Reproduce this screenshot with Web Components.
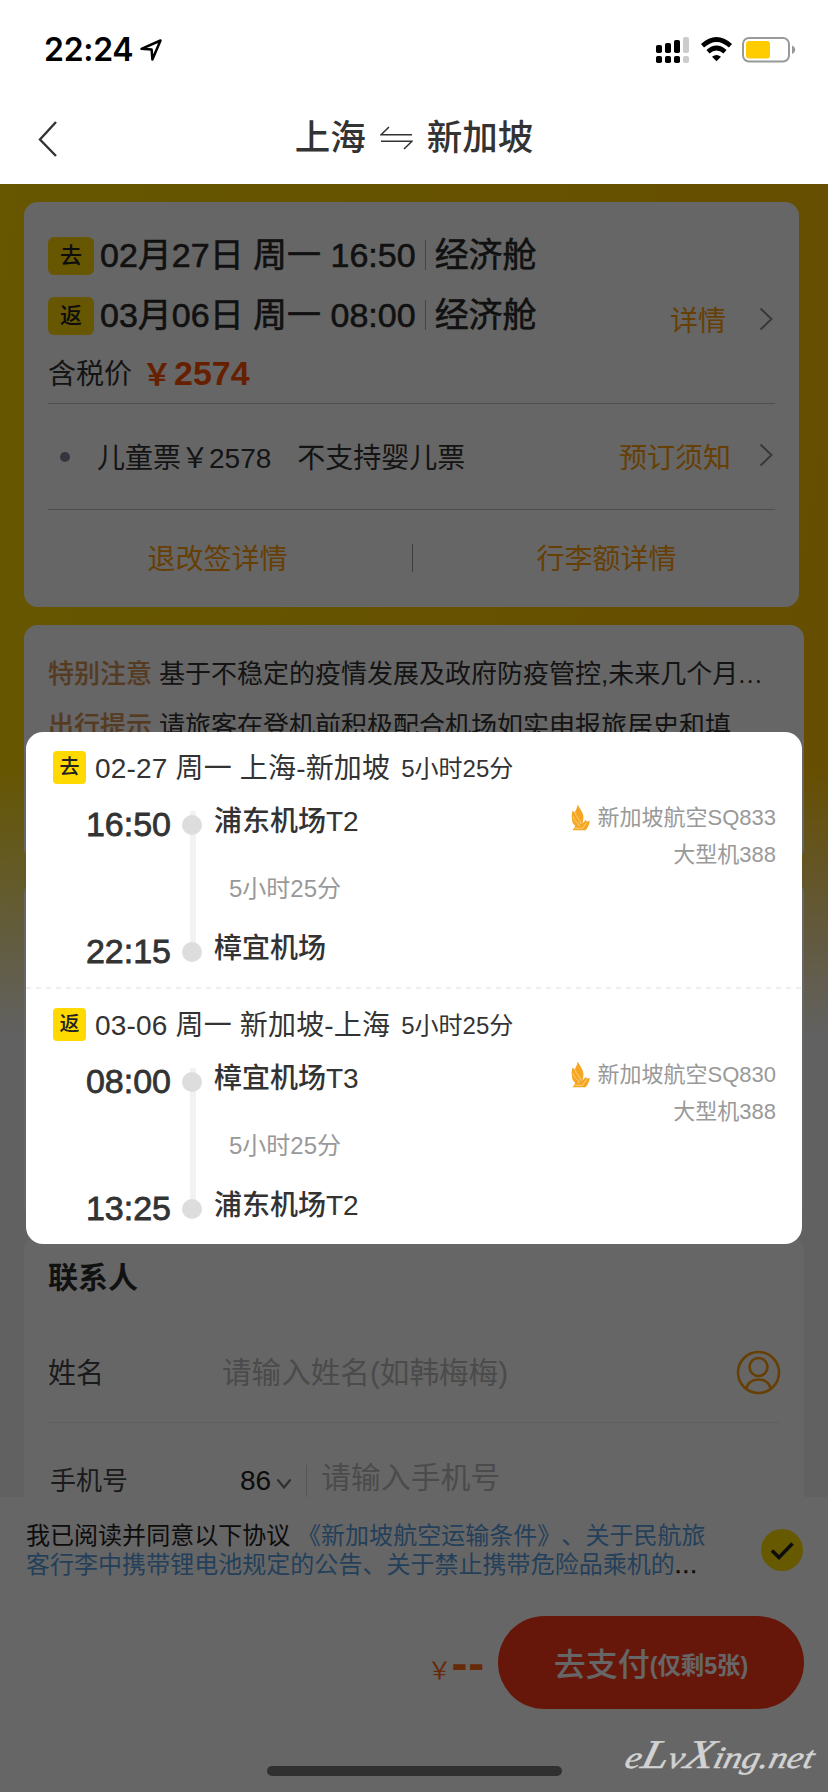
<!DOCTYPE html>
<html lang="zh-CN">
<head>
<meta charset="utf-8">
<title>上海 ⇋ 新加坡</title>
<style>
html,body{margin:0;padding:0}
body{width:828px;height:1792px;overflow:hidden;background:#fff;font-family:"Liberation Sans","Noto Sans CJK SC",sans-serif;color:#333;text-spacing-trim:space-all}
</style>
</head>
<body>
<booking-page></booking-page>
<script>
const define = (name, html) => customElements.define(name, class extends HTMLElement {
  connectedCallback() {
    if (this.shadowRoot) return;
    const t = document.createElement('template');
    t.innerHTML = '<style>*{box-sizing:border-box}:host{display:block;box-sizing:border-box;white-space:nowrap}</style>' +
      (typeof html === 'function' ? html(this) : html);
    this.attachShadow({mode: 'open'}).append(t.content.cloneNode(true));
  }
});

define('status-bar', `
<style>
:host{height:92px;display:flex;padding:8px 32px 0 44px;align-items:center;justify-content:space-between;color:#000}
.l,.r{display:flex;align-items:center}
.t{font:600 32px/40px Inter,sans-serif;letter-spacing:-.3px;width:95px}
svg{display:block}
</style>
<div class="l"><span class="t">22:24</span>
<svg width="24" height="24" viewBox="0 0 24 24"><path d="M2.5 10.8 L21.5 2.5 L13.4 21.5 L12.6 11.6 Z" fill="none" stroke="#000" stroke-width="2.5" stroke-linejoin="round"/></svg></div>
<div class="r">
<svg width="140" height="28" viewBox="655 36 140 28">
<g fill="#000"><rect x="655" y="45" width="6" height="8" rx="1.8"/><rect x="664" y="43" width="6" height="10" rx="1.8"/><rect x="673" y="40" width="6" height="13" rx="1.8"/><rect x="655" y="56" width="6" height="7" rx="1.8"/><rect x="664" y="56" width="6" height="7" rx="1.8"/><rect x="673" y="56" width="6" height="7" rx="1.8"/></g>
<g fill="#ccc"><rect x="682" y="37" width="6" height="16" rx="1.8"/><rect x="682" y="56" width="6" height="7" rx="1.8"/></g>
<g fill="none" stroke="#000" stroke-width="4.6"><path d="M701.5 45.8 Q715.5 33.2 729.5 45.8"/><path d="M707 51.7 Q715.5 44.3 724 51.7"/></g>
<path d="M711 56.8 Q715.5 53 720 56.8 L715.5 61.3Z"/>
<rect x="742" y="38" width="46" height="23.5" rx="6" fill="none" stroke="#999" stroke-width="2"/>
<rect x="745" y="41" width="24" height="17.5" rx="3" fill="#fc0"/>
<path d="M791 45.5 Q794.2 47 794.2 49.8 Q794.2 52.5 791 54Z" fill="#999"/>
</svg></div>`);

define('nav-bar', `
<style>
:host{height:92px;display:grid;grid-template-columns:1fr auto 1fr;align-items:center;padding:2px 0 0 38px}
.title{display:flex;align-items:center;font-size:35.5px;font-weight:500;line-height:44px;gap:14px;position:relative;left:-19px;top:-1px}
svg{display:block}
</style>
<svg width="20" height="38" viewBox="0 0 20 38"><path d="M18 2 L2 19.5 L18 36" fill="none" stroke="#333" stroke-width="2.4"/></svg>
<div class="title"><span>上海</span>
<svg width="33" height="24" viewBox="0 0 33 24"><path d="M9 1 L1 8.8 H32 M1 15.2 H32 L24 23" fill="none" stroke="#333" stroke-width="1.6"/></svg>
<span>新加坡</span></div><span></span>`);

define('leg-badge', `
<style>
:host{display:grid;place-items:center;width:var(--w,46px);height:var(--h,38px);border-radius:var(--r,6px);background:#ffd900;color:#222;font-size:var(--fs,22px);font-weight:500;line-height:1;flex:none}
</style><slot></slot>`);

define('chevron-icon', `
<style>:host{width:14px;height:24px}svg{display:block}</style>
<svg width="14" height="24" viewBox="0 0 14 24"><path d="M1.5 1.5 L12.5 12 L1.5 22.5" fill="none" stroke="#8c8c8c" stroke-width="2"/></svg>`);

define('fare-card', `
<style>
:host{width:775px;height:405px;margin-left:24px;padding:0 24px;background:#fff;border-radius:14px}
.leg{display:flex;align-items:center;height:60px;padding-bottom:2px;font-size:34px;line-height:40px;color:#2c2c2c;-webkit-text-stroke:.6px #2c2c2c}
leg-badge{margin-right:6px;-webkit-text-stroke:0;position:relative;top:1px}
i{width:1px;height:30px;background:#aaa;margin:0 9px}
.top{display:grid;grid-template-columns:1fr auto;padding-top:24px;height:202px;border-bottom:1.5px solid #c4c4c4}
.price{display:flex;align-items:center;height:56px;font-size:28px;color:#333;position:relative;top:-2px}
.price b{font-size:34px;color:#ff5200;margin-left:10px}
.price b span{font-size:30px;margin-right:2px}
.lnk{display:flex;align-items:center;font-size:28px;color:#ff9d0a}
.top .lnk{margin-top:73px;height:40px}
chevron-icon{margin:0 2px 0 33px}
.child{display:flex;align-items:center;height:106px;padding-bottom:1px;border-bottom:1.5px solid #c4c4c4;font-size:28px;color:#333}
.dot{width:10px;height:10px;border-radius:50%;background:#85859a;margin:2px 27px 0 12px}
.child .s{margin-left:26px;flex:1}
.child chevron-icon{margin-left:28px;position:relative;top:-1px}
.foot{display:grid;grid-template-columns:1fr 1px 1fr;height:96px;align-items:center;justify-items:center;font-size:28px;color:#ff9d0a}
.foot u{width:1px;height:28px;background:#999;position:relative;left:1px}
.foot span{position:relative;left:-12px;top:-1px}
.foot span:last-child{left:13px}
</style>
<div class="top"><div>
<div class="leg"><leg-badge>去</leg-badge>02月27日 周一 16:50<i></i>经济舱</div>
<div class="leg"><leg-badge>返</leg-badge>03月06日 周一 08:00<i></i>经济舱</div>
<div class="price">含税价<b><span>￥</span>2574</b></div>
</div><div class="lnk">详情<chevron-icon></chevron-icon></div></div>
<div class="child"><div class="dot"></div><span>儿童票￥2578</span><span class="s">不支持婴儿票</span><div class="lnk">预订须知<chevron-icon></chevron-icon></div></div>
<div class="foot"><span>退改签详情</span><u></u><span>行李额详情</span></div>`);

define('notice-card', `
<style>
:host{width:780px;height:237px;margin:18px 0 0 24px;padding:23px 24px 0;background:#fff;border-radius:14px;font-size:26px;line-height:52px;color:#333}
div{display:flex}
b{font-weight:500;color:#d89558;margin-right:7px;-webkit-text-stroke:.2px #d89558}
s{text-decoration:none;letter-spacing:1px}
</style>
<div><b>特别注意</b><span>基于不稳定的疫情发展及政府防疫管控,未来几个月<s>...</s></span></div>
<div><b>出行提示</b><span>请旅客在登机前积极配合机场如实申报旅居史和填</span></div>`);

define('contact-card', `
<style>
:host{width:780px;height:262px;margin:18px 0 0 24px;padding:14px 24px 0;background:#fff;border-radius:14px 14px 0 0;font-size:28px}
h2{margin:0;font-size:30px;line-height:54px;font-weight:700;color:#2c2c2c}
.name{display:flex;align-items:center;height:98px;margin-top:20px;padding-bottom:2px;border-bottom:1.5px solid #ededed}
.name,.tel{color:#444}
.name span{width:174px}
.name span,.name em{position:relative;top:-2px}
em{font-style:normal;color:#bbb;font-size:29.6px}
.name em{flex:1}
.name svg{position:relative;left:1px}
.tel{display:flex;height:76px;line-height:76px;align-items:center;padding:39px 0 0 2px;font-size:26px}
.tel span{width:190px}
.tel b{font-weight:400;font-size:28px;color:#222}
.tel svg{margin:6px 14px 0 5px}
.tel i{width:1px;height:32px;background:#d5d5d5;margin-right:14px}
.tel em{margin-top:-5px;letter-spacing:.3px}
</style>
<h2>联系人</h2>
<div class="name"><span>姓名</span><em>请输入姓名(如韩梅梅)</em>
<svg width="45" height="45" viewBox="0 0 45 45" fill="none" stroke="#ff9d0a" stroke-width="2.6"><circle cx="22.5" cy="22.5" r="20.5"/><circle cx="22.5" cy="17" r="9"/><path d="M10.3 38.5 C12.5 26.5 32.5 26.5 34.7 38.5"/></svg></div>
<div class="tel"><span>手机号</span><b>86</b><svg width="16" height="12" viewBox="0 0 16 12"><path d="M1.5 1.5 L8 9.5 L14.5 1.5" fill="none" stroke="#777" stroke-width="2.2"/></svg><i></i><em>请输入手机号</em></div>`);

define('pay-bar', `
<style>
:host{height:295px;background:#fff;padding:24px 24px 0 26px}
.agree{display:flex;justify-content:space-between;height:95px;font-size:24px;line-height:28.5px;color:#222}
a{color:#5a9fe2}
.agree div{padding-top:1px;letter-spacing:.03px}
.agree s{text-decoration:none;letter-spacing:1px;-webkit-text-stroke:.5px #222}
.agree svg{margin:8px 1px 0 0}
.pay{display:flex;justify-content:flex-end;align-items:center;height:93px}
.cur{font-size:24px;color:#ff6a14;margin-top:11px}
.dash{font:700 48px/60px "Liberation Sans",sans-serif;color:#ff6a14;letter-spacing:.8px;margin:2px 13px 0 0}
button{all:unset;display:flex;align-items:center;justify-content:center;width:306px;height:93px;border-radius:47px;background:#ff3b1a;color:#fff;font-size:32px;font-weight:500;box-sizing:border-box}
button span{position:relative;top:-1px}
button small{font-size:23.3px;font-weight:700;margin-top:3px}
</style>
<div class="agree"><div>我已阅读并同意以下协议 <a>《新加坡航空运输条件》、关于民航旅<br>客行李中携带锂电池规定的公告、关于禁止携带危险品乘机的</a><s>...</s></div>
<svg width="42" height="42" viewBox="0 0 42 42"><circle cx="21" cy="21" r="21" fill="#ffdf00"/><path d="M11 21.5 L18 28.5 L31.5 14.5" fill="none" stroke="#222" stroke-width="3.6"/></svg></div>
<div class="pay"><span class="cur">￥</span><span class="dash">--</span><button><span>去支付</span><small>(仅剩5张)</small></button></div>`);

define('airline-logo', `
<style>:host{width:20px;height:27px}svg{display:block}</style>
<svg width="20" height="27" viewBox="0 0 20 27"><path d="M6.6 .5 C8.5 4 12 8 12.4 12.5 C12.6 15 11.9 17 11.6 19.5 L14.8 15.8 L15.6 17.6 L18.8 17 C18.4 20.5 16.5 24.5 14.6 26.3 H1.2 C2.8 24.8 4 23 4 21.5 C2 20 1 18 1 15.5 C.4 12 .8 9 1.6 6.5 L3.6 8.5 C4.6 6.5 6.4 4 6.6 .5Z" fill="#f5a623"/><path d="M4 8.5 C4.6 13 9.5 15 10 20 M2 12.5 C3 17.5 7.5 18 8.2 22 M4 24.3 H11.5 L15.4 18.6" fill="none" stroke="#ffdc94" stroke-width=".8"/></svg>`);

define('flight-segment', el => {
  const a = n => el.getAttribute(n);
  return `
<style>
:host{height:256px;padding:18px 27px 0 27px;color:#333}
header{display:flex;align-items:center;height:34px;font-size:28px;--w:33px;--h:33px;--r:4px;--fs:20px}
header span{margin:-2px 0 0 9px;letter-spacing:.18px}
header small{font-size:24px;margin:-1px 0 0 11px}
main{display:grid;grid-template-columns:118px 41px 1fr auto}
.time{display:grid;grid-template-rows:40px 1fr 40px;height:167px;margin-top:20px;font-size:34px;line-height:40px;text-align:right;-webkit-text-stroke:.8px #333}
.rail{width:20px;height:161px;margin:27px 0 0 11px;display:flex;flex-direction:column;align-items:center;padding-top:4px;background:linear-gradient(#f2f2f2,#f2f2f2) 8px 0/6px 145px no-repeat}
.rail i{width:20px;height:20px;border-radius:50%;background:#ddd}
.rail i+i{margin-top:107px}
.port{display:grid;grid-template-rows:40px 1fr 40px;align-items:center;height:167px;margin:18px 0 0 2px;font-size:28px;line-height:40px;font-weight:500}
.port .dur{font-size:24px;font-weight:400;color:#999;margin:6px 0 0 15px}
.air{margin-top:16px;text-align:right;font-size:22px;line-height:36.5px;color:#999;position:relative;left:1px}
.air div{display:flex;justify-content:flex-end;align-items:center;height:37px}
airline-logo{margin:-3px 7px 0 0}
</style>
<header><leg-badge>${a('leg')}</leg-badge><span>${a('route')}</span><small>${a('duration')}</small></header>
<main><div class="time"><span>${a('depart')}</span><span></span><span>${a('arrive')}</span></div>
<div class="rail"><i></i><i></i></div>
<div class="port"><span>${a('from')}</span><span class="dur">${a('duration')}</span><span>${a('to')}</span></div>
<div class="air"><div><airline-logo></airline-logo>${a('flight')}</div><div>大型机388</div></div></main>`;
});

define('itinerary-dialog', `
<style>
:host{position:absolute;left:26px;top:732px;width:776px;height:512px;background:#fff;border-radius:17px}
hr{border:0;height:2px;margin:-1px 0 0;background:repeating-linear-gradient(90deg,#eee 0 5px,transparent 5px 10px)}
</style>
<flight-segment leg="去" route="02-27 周一 上海-新加坡" duration="5小时25分" depart="16:50" arrive="22:15" from="浦东机场T2" to="樟宜机场" flight="新加坡航空SQ833"></flight-segment>
<hr>
<flight-segment leg="返" route="03-06 周一 新加坡-上海" duration="5小时25分" depart="08:00" arrive="13:25" from="樟宜机场T3" to="浦东机场T2" flight="新加坡航空SQ830"></flight-segment>`);

define('booking-page', `
<style>
:host{position:relative;width:828px;height:1792px;overflow:hidden}
.content{height:1313px;padding-top:18px;background:linear-gradient(180deg,transparent 580px,#f2f2f2 850px),linear-gradient(100deg,#ffd900,#ffc000)}
.gap{width:780px;height:339px;margin:18px 0 0 24px;background:#fff;border-radius:14px}
.scrim{position:absolute;inset:184px 0 0 0;background:rgba(0,0,0,.6)}
.home{position:absolute;left:267px;top:1766px;width:295px;height:10px;border-radius:5px;background:#303030}
.mark{position:absolute;left:602px;top:1714px;width:226px;height:78px;overflow:visible}
</style>
<status-bar></status-bar>
<nav-bar></nav-bar>
<div class="content"><fare-card></fare-card><notice-card></notice-card><div class="gap"></div><contact-card></contact-card></div>
<pay-bar></pay-bar>
<div class="scrim"></div>
<itinerary-dialog></itinerary-dialog>
<div class="home"></div>
<svg class="mark" viewBox="-20 -20 226 78"><text x="2" y="34" textLength="188" lengthAdjust="spacingAndGlyphs" transform="skewX(-14) translate(8 0)" font-family="Liberation Serif,serif" font-style="italic" font-size="31" fill="#d2d2d2" stroke="#d2d2d2" stroke-width=".5">e<tspan font-size="41">L</tspan>v<tspan font-size="41">X</tspan>ing.net</text></svg>`);
</script>
</body>
</html>
